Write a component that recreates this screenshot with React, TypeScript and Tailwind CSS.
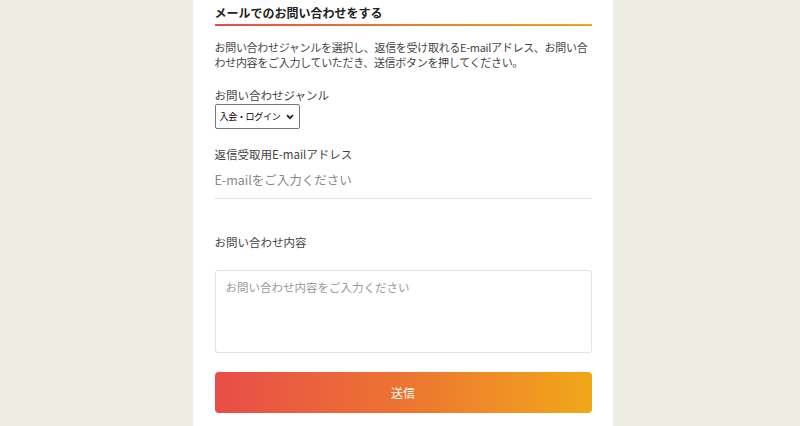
export default function App() {
  return (
    <div
      className="min-h-[426px] bg-[#eeede3] flex justify-center pl-[5px]"
      style={{ fontFamily: '"Noto Sans CJK JP", "Noto Sans", sans-serif' }}
    >
      <div className="w-[420px] bg-white pl-[22px] pr-[21px] pt-[4px]">
        <h2 className="text-[12px] font-bold text-[#222] leading-[18px] pb-[2px]">メールでのお問い合わせをする</h2>
        <div className="h-[2px] bg-gradient-to-r from-[#e84a4a] via-[#ec7a2e] to-[#f2a516]" />
        <p className="mt-[14px] text-[11px] leading-[15px] text-[#444] tracking-[-0.3px]">
          お問い合わせジャンルを選択し、返信を受け取れるE-mailアドレス、お問い合わせ内容をご入力していただき、送信ボタンを押してください。
        </p>

        <label className="block mt-[18px] text-[11.5px] leading-[15px] text-[#444]">お問い合わせジャンル</label>
        <div className="relative mt-[1px] w-[85px] h-[25px]">
          <select className="block appearance-none h-[25px] w-[85px] border border-[#767676] rounded-[2px] text-[9px] tracking-[-0.3px] text-black pl-[4px] bg-white">
            <option>入会・ログイン</option>
          </select>
          <svg className="absolute right-[6px] top-[10px] pointer-events-none" width="8" height="6" viewBox="0 0 8 6">
            <path d="M1 1.2 L4 4.2 L7 1.2" fill="none" stroke="#222" strokeWidth="1.8" />
          </svg>
        </div>

        <label className="block mt-[18px] text-[11.5px] leading-[15px] text-[#444]">返信受取用E-mailアドレス</label>
        <input
          type="text"
          placeholder="E-mailをご入力ください"
          className="mt-[9px] block w-full border-b border-[#ddd] pb-[9px] text-[12.5px] leading-[18px] placeholder:text-[#888] outline-none"
        />

        <label className="block mt-[36px] text-[11.5px] leading-[15px] text-[#444]">お問い合わせ内容</label>
        <textarea
          placeholder="お問い合わせ内容をご入力ください"
          className="mt-[20px] block w-full h-[83px] border border-[#e3e3e3] rounded-[3px] px-[10px] py-[8px] text-[11.5px] placeholder:text-[#999] resize-none outline-none"
        />

        <button className="mt-[19px] w-full h-[41px] rounded-[4px] bg-gradient-to-r from-[#e84c47] via-[#ec7430] to-[#f1a715] text-white text-[12px]">
          送信
        </button>
      </div>
    </div>
  );
}
